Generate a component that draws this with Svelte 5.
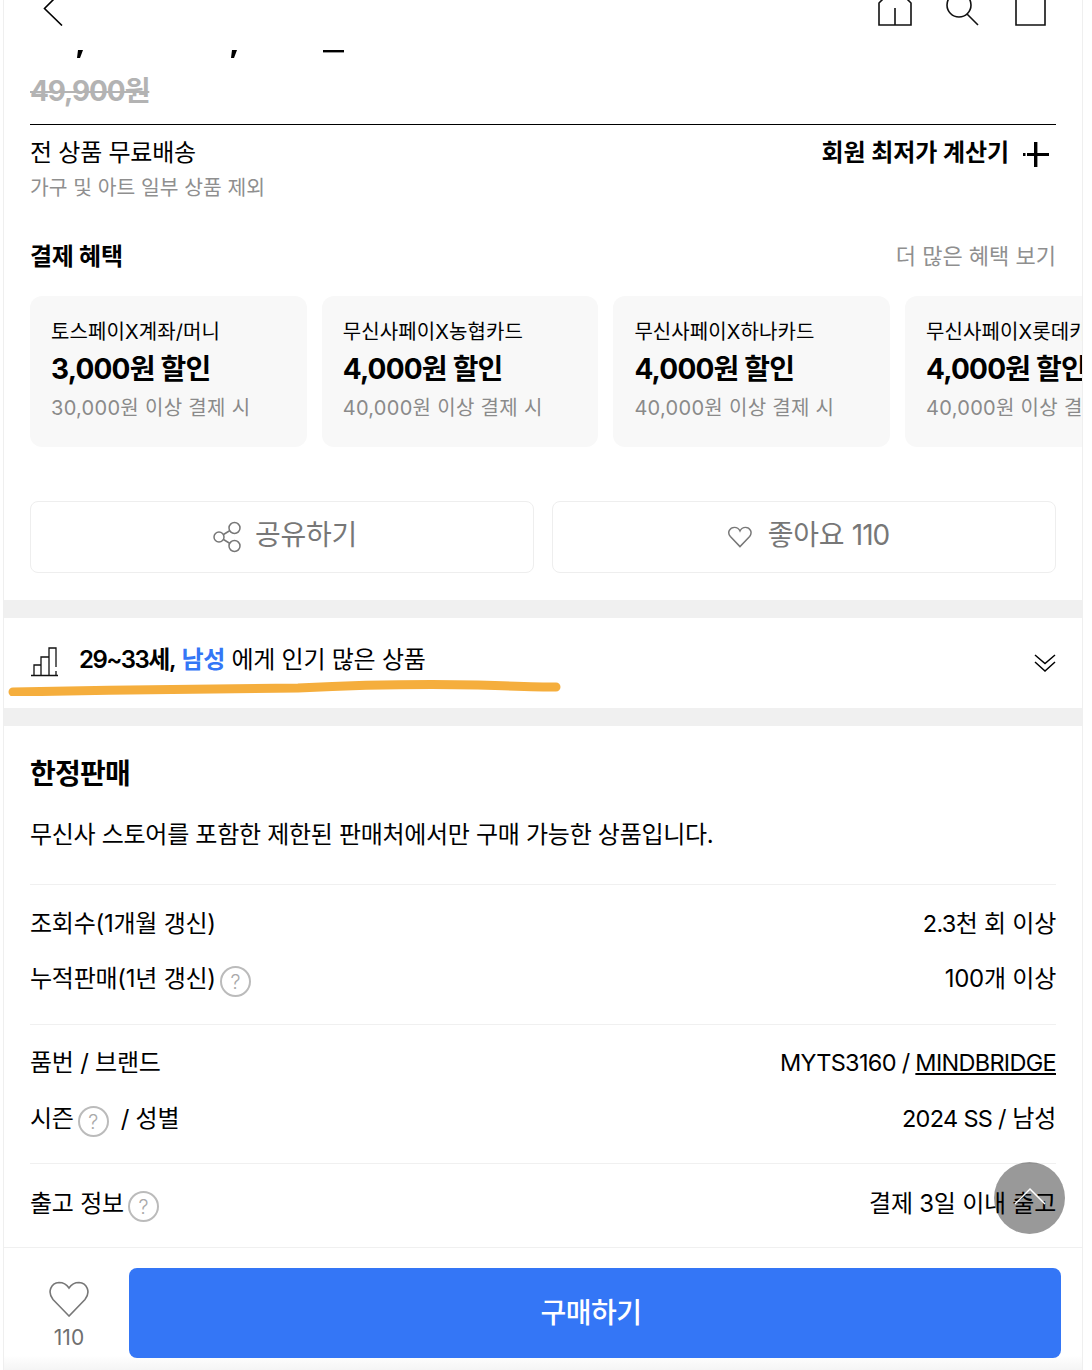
<script>
  const cards = [
    { name: "토스페이X계좌/머니", off: "3,000원 할인", cond: "30,000원 이상 결제 시" },
    { name: "무신사페이X농협카드", off: "4,000원 할인", cond: "40,000원 이상 결제 시" },
    { name: "무신사페이X하나카드", off: "4,000원 할인", cond: "40,000원 이상 결제 시" },
    { name: "무신사페이X롯데카드", off: "4,000원 할인", cond: "40,000원 이상 결제 시" }
  ];
</script>

<div class="page">
  <header class="topbar">
    <svg class="back" width="24" height="26" viewBox="0 0 24 26" fill="none" stroke="#000" stroke-width="1.6"><path d="M14 -1 L4.500 8.500 L22 25.500"/></svg>
    <div class="top-icons">
      <svg width="36" height="26" viewBox="0 0 36 26" fill="none" stroke="#111" stroke-width="1.6"><path d="M2 25 V3 L8 -3 H28 L34 3 V25 Z M18 8 V25"/></svg>
      <svg class="search" width="38" height="26" viewBox="0 0 38 26" fill="none" stroke="#111" stroke-width="1.6"><circle cx="17" cy="5" r="12"/><path d="M25 14 L36 25"/></svg>
      <svg width="32" height="26" viewBox="0 0 32 26" fill="none" stroke="#111" stroke-width="1.6"><path d="M2 -4 V25 H31 V-4"/></svg>
    </div>
  </header>

  <svg class="clipped" width="340" height="12" viewBox="0 0 340 12" fill="#000"><path d="M48 2 H53 L50 10 H47 Z M202 2 H207 L204 10 H201 Z"/><rect x="293" y="2" width="21" height="2.400"/></svg>

  <div class="old-price">49,900원</div>

  <section class="shipping">
    <div>
      <div class="ship-title">전 상품 무료배송</div>
      <div class="ship-sub">가구 및 아트 일부 상품 제외</div>
    </div>
    <div class="calc">
      회원 최저가 계산기
      <svg width="26" height="26" viewBox="0 0 26 26" fill="#000"><rect x="11" y="1" width="3.400" height="25"/><rect x="4" y="12" width="22" height="3"/><rect x="0" y="12" width="2.500" height="3"/></svg>
    </div>
  </section>

  <div class="benefit-head">
    <h3>결제 혜택</h3>
    <span>더 많은 혜택 보기</span>
  </div>

  <div class="cards">
    {#each cards as card}
      <div class="card">
        <div class="card-name">{card.name}</div>
        <div class="card-off">{card.off}</div>
        <div class="card-cond">{card.cond}</div>
      </div>
    {/each}
  </div>

  <div class="actions">
    <button>
      <svg width="30" height="32" viewBox="0 0 30 32" fill="none" stroke="#777" stroke-width="1.500"><circle cx="6" cy="16" r="5"/><circle cx="21.500" cy="7" r="5.500"/><circle cx="21.500" cy="25" r="5.500"/><path d="M10.500 13.500 L17 9.500 M10.500 18.500 L17 22.500"/></svg>
      <span>공유하기</span>
    </button>
    <button class="like-btn">
      <svg width="26" height="22" viewBox="0 0 28 24" fill="none" stroke="#777" stroke-width="1.600"><path d="M14 22.500 L3.500 11.500 C-0.500 7 3 1.500 8 1.500 C10.500 1.500 13 3.500 14 5.500 C15 3.500 17.500 1.500 20 1.500 C25 1.500 28 7 24.500 11.500 Z"/></svg>
      <span>좋아요 <span class="en-btn">110</span></span>
    </button>
  </div>

  <div class="band"></div>

  <div class="popular">
    <svg width="30" height="30" viewBox="0 0 30 30" fill="none" stroke="#111" stroke-width="1.300"><path d="M1 28.500 H28 M4 28 V18 H11 V28 M11 28 V10 H19 V28 M19 28 V1 H26 V20 M26 24 V28"/></svg>
    <p><b>29~33세,</b> <em>남성</em> 에게 인기 많은 상품</p>
    <svg class="chev" width="24" height="20" viewBox="0 0 24 20" fill="none" stroke="#000" stroke-width="1.500"><path d="M2 2 L12 10.500 L22 2 M2 9 L12 18 L22 9"/></svg>
    <svg class="scribble" width="560" height="16" viewBox="0 0 560 16" fill="none" stroke="#f5ae3d" stroke-width="9" stroke-linecap="round"><path d="M5 12 C100 10 200 9 290 8 C350 5 420 4 470 5 C500 6 530 7 548 7"/></svg>
  </div>

  <div class="band"></div>

  <section class="limited">
    <h2>한정판매</h2>
    <p>무신사 스토어를 포함한 제한된 판매처에서만 구매 가능한 상품입니다.</p>
  </section>

  <section class="info first">
    <div class="row"><span>조회수(1개월 갱신)</span><span><span class="en">2.3</span>천 회 이상</span></div>
    <div class="row"><span class="lbl">누적판매(1년 갱신)<i class="help">?</i></span><span>100개 이상</span></div>
  </section>
  <section class="info second">
    <div class="row"><span>품번 / 브랜드</span><span class="en">MYTS3160 / <u>MINDBRIDGE</u></span></div>
    <div class="row"><span class="lbl">시즌<i class="help">?</i><span class="slash">/ 성별</span></span><span><span class="en">2024 SS /</span> 남성</span></div>
  </section>
  <section class="info third">
    <div class="row"><span class="lbl">출고 정보<i class="help">?</i></span><span>결제 3일 이내 출고</span></div>
  </section>

  <footer class="buybar">
    <div class="like">
      <svg width="42" height="38" viewBox="0 0 42 38" fill="none" stroke="#777" stroke-width="1.600"><path d="M21 35 L5 18.500 C-1 11 3 2 11 1.500 C15 1.500 19 4 21 7 C23 4 27 1.500 31 1.500 C39 2 43 11 37 18.500 Z"/></svg>
      <span>110</span>
    </div>
    <button class="buy">구매하기</button>
  </footer>

  <div class="to-top">
    <svg width="32" height="18" viewBox="0 0 32 18" fill="none" stroke="#fff" stroke-width="1.500"><path d="M1 17 L16 2 L31 17"/></svg>
  </div>
</div>

<style>
  :global(body) { margin: 0; background: #fff; }
  .page {
    position: relative;
    box-sizing: border-box;
    width: 1080px;
    height: 1370px;
    margin-left: 3px;
    border-left: 1px solid #efefef;
    border-right: 1px solid #efefef;
    overflow: hidden;
    font-family: Inter, "Noto Sans CJK KR", sans-serif;
    color: #000;
    background: #fff;
  }
  .topbar { display: flex; justify-content: space-between; height: 26px; padding: 0 36px 0 36px; }
  .top-icons { display: flex; gap: 29px; }
  .top-icons svg, .back { display: block; }
  .search { margin-right: 5px; }
  .clipped { display: block; margin: 22px 0 0 26px; }
  .old-price { margin: 13px 0 0 26px; font-size: 28px; line-height: 36px; font-weight: 700; color: #b3b3b3; text-decoration: line-through; letter-spacing: -1.1px; }
  .shipping { display: flex; justify-content: space-between; margin: 15px 26px 0; padding-top: 11px; border-top: 1px solid #000; }
  .ship-title { font-size: 24px; line-height: 34px; letter-spacing: -0.25px; }
  .ship-sub { font-size: 20.4px; line-height: 36px; color: #8f8f8f; }
  .calc { display: flex; align-items: flex-start; gap: 14px; margin-right: 7px; font-size: 24px; font-weight: 700; line-height: 34px; letter-spacing: -0.05px; }
  .calc svg { margin-top: 5px; }
  .benefit-head { display: flex; justify-content: space-between; align-items: center; margin: 28px 26px 0; height: 40px; }
  .benefit-head h3 { margin: 0; font-size: 24px; font-weight: 700; letter-spacing: -0.25px; }
  .benefit-head span { font-size: 22px; color: #8f8f8f; }
  .cards { display: flex; gap: 15px; margin: 22px 0 0 26px; }
  .card { flex: 0 0 276.7px; box-sizing: border-box; height: 151px; padding: 21px 0 0 21px; border-radius: 12px; background: #f8f8f8; white-space: nowrap; }
  .card-name { font-size: 20px; line-height: 30px; letter-spacing: 0.1px; }
  .card-off { font-size: 28px; font-weight: 700; line-height: 44px; letter-spacing: -0.8px; }
  .card-cond { font-size: 20px; line-height: 34px; color: #8a8a8a; letter-spacing: 0.3px; }
  .actions { display: flex; gap: 18px; margin: 54px 26px 0; }
  .actions button { flex: 0 0 504px; display: flex; justify-content: center; align-items: center; gap: 12px; height: 72px; padding: 0 0 0 6px; border: 1px solid #eee; border-radius: 8px; background: #fff; font: inherit; font-size: 28px; color: #777; }
  .actions button span { margin-bottom: 8px; letter-spacing: -0.3px; }
  .actions button .en-btn { margin: 0; letter-spacing: -1px; }
  .actions .like-btn { gap: 15px; padding-left: 8px; }
  .band { height: 18px; background: #f0f0f0; }
  .actions + .band { margin-top: 27px; }
  .popular { position: relative; display: flex; align-items: center; height: 90px; padding: 0 26px; }
  .popular > svg:first-child { margin-bottom: 2px; }
  .popular p { flex: 1; margin: 0 0 12px 19px; font-size: 24px; letter-spacing: -0.25px; }
  .popular b { font-weight: 600; letter-spacing: -1.5px; }
  .popular em { font-style: normal; font-weight: 700; color: #3476f6; letter-spacing: -0.4px; }
  .chev { margin: 0 -1px 0 0; }
  .scribble { position: absolute; left: 4px; top: 62px; }
  .limited { padding: 0 26px; height: 158px; box-sizing: border-box; }
  .limited h2 { margin: 0; padding-top: 28px; font-size: 28px; line-height: 40px; font-weight: 700; letter-spacing: -0.8px; }
  .limited p { margin: 22px 0 0; font-size: 24px; line-height: 38px; letter-spacing: -0.3px; }
  .info { margin: 0 26px; border-top: 1px solid #f0f0f0; box-sizing: border-box; font-size: 24px; letter-spacing: -0.25px; }
  .first { height: 140px; padding-top: 20px; }
  .first .row:first-child { height: 55px; }
  .second { height: 139px; padding-top: 19px; }
  .third { height: 84px; padding-top: 21px; }
  .row { display: flex; justify-content: space-between; align-items: flex-start; height: 56px; line-height: 38px; }
  .lbl { display: flex; align-items: flex-start; gap: 4px; }
  .slash { margin-left: 8px; }
  .en { font-size: 23.500px; letter-spacing: -0.7px; }
  .help { display: inline-flex; justify-content: center; align-items: center; box-sizing: border-box; width: 31px; height: 31px; margin-top: 6px; border: 2px solid #bbb; border-radius: 50%; color: #aaa; font-style: normal; font-size: 20px; font-weight: 300; }
  .buybar { display: flex; gap: 21px; height: 123px; box-sizing: border-box; padding: 20px 21px 0 26px; margin: 0; border-top: 1px solid #f0f0f0; background: linear-gradient(#fff 88%, #f5f5f5); }
  .like { flex: 0 0 78px; display: flex; flex-direction: column; align-items: center; gap: 5px; padding-top: 13px; color: #6f6f6f; font-size: 21px; line-height: 28px; }
  .like svg { display: block; }
  .buy { flex: 1; height: 90px; padding: 0 8px 4px 0; border: 0; border-radius: 8px; background: #3476f6; color: #fff; font: inherit; font-size: 28px; font-weight: 500; letter-spacing: -0.5px; }
  .to-top { position: absolute; left: 990px; top: 1162px; display: flex; justify-content: center; padding-top: 25px; box-sizing: border-box; width: 71px; height: 72px; border-radius: 50%; background: rgba(0, 0, 0, 0.4); }
  .to-top svg { display: block; }
</style>
